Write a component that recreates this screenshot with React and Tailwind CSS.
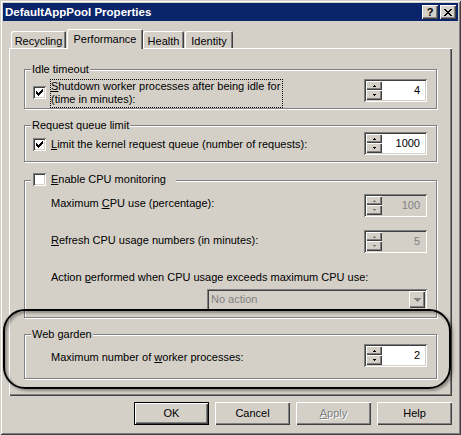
import React from "react";

const RAISED = "shadow-[inset_1px_1px_0_#fff,inset_-1px_-1px_0_#404040,inset_-2px_-2px_0_#808080]";
const SUNKEN = "shadow-[inset_1px_1px_0_#808080,inset_-1px_-1px_0_#fff,inset_2px_2px_0_#404040,inset_-2px_-2px_0_#d4d0c8]";

function Check({ checked, className = "" }) {
  return (
    <span className={`flex w-[13px] h-[13px] shrink-0 items-center justify-center bg-white ${SUNKEN} ${className}`}>
      {checked && (
        <svg width="7" height="7" viewBox="0 0 7 7" shapeRendering="crispEdges">
          <path
            d="M6 0h1v1H6zM5 1h2v1H5zM0 2h1v1H0zM4 2h3v1H4zM0 3h2v1H0zM3 3h3v1H3zM0 4h5v1H0zM1 5h3v1H1zM2 6h1v1H2z"
            fill="#000"
          />
        </svg>
      )}
    </span>
  );
}

function Tri({ dir, color }) {
  return (
    <svg width="3" height="2" viewBox="0 0 3 2" shapeRendering="crispEdges">
      {dir === "up" ? (
        <path d="M1 0h1v1h1v1H0V1h1z" fill={color} />
      ) : (
        <path d="M0 0h3v1H2v1H1V1H0z" fill={color} />
      )}
    </svg>
  );
}

function Spin({ value, disabled, className = "" }) {
  const c = disabled ? "#808080" : "#000";
  return (
    <div className={`flex w-[63px] h-[23px] shrink-0 p-[2px] ${disabled ? "bg-[#d4d0c8]" : "bg-white"} ${SUNKEN} ${className}`}>
      <div className="flex flex-col w-[16px]">
        <div className={`flex h-[9px] items-center justify-center bg-[#d4d0c8] ${RAISED}`}>
          <Tri dir="up" color={c} />
        </div>
        <div className={`flex h-[10px] items-center justify-center bg-[#d4d0c8] ${RAISED}`}>
          <Tri dir="down" color={c} />
        </div>
      </div>
      <div className={`flex flex-1 items-center justify-end pr-[5px] ${disabled ? "text-[#808080]" : "text-black"}`}>
        {value}
      </div>
    </div>
  );
}

function Group({ label, legend, className = "", children }) {
  return (
    <div className={`relative w-[413px] border border-[#808080] shadow-[1px_1px_0_#fff,inset_1px_1px_0_#fff] ${className}`}>
      {legend ? (
        legend
      ) : (
        <span className="absolute -top-[7px] left-[6px] bg-[#d4d0c8] px-[1px] leading-[13px]">{label}</span>
      )}
      {children}
    </div>
  );
}

function Btn({ children, def }) {
  return (
    <div
      className={`flex w-[75px] h-[23px] items-center justify-center bg-[#d4d0c8] ${RAISED} ${def ? "border border-black" : ""}`}
    >
      {children}
    </div>
  );
}

function Tab({ children, selected, className = "" }) {
  return (
    <div
      className={`flex justify-center pt-[4px] rounded-t-[2px] bg-[#d4d0c8] shadow-[inset_1px_1px_0_#fff,inset_-1px_0_0_#404040,inset_-2px_0_0_#808080] ${
        selected ? "relative z-10 h-[20px] -mb-[1px]" : "h-[17px]"
      } ${className}`}
    >
      {children}
    </div>
  );
}

export default function App() {
  return (
    <div className="relative flex flex-col w-[461px] h-[435px] p-[3px] bg-[#d4d0c8] font-['Liberation_Sans',Arial,sans-serif] text-[11px] leading-[13px] text-black shadow-[inset_1px_1px_0_#d4d0c8,inset_-1px_-1px_0_#404040,inset_2px_2px_0_#fff,inset_-2px_-2px_0_#808080]">
      {/* Title bar */}
      <div className="flex h-[18px] shrink-0 items-center justify-between bg-[#0a246a] pl-[2px] pr-[2px]">
        <span className="text-[11.5px] font-bold text-white">DefaultAppPool Properties</span>
        <div className="flex gap-[2px]">
          <div className={`flex w-[16px] h-[14px] items-center justify-center bg-[#d4d0c8] ${RAISED} text-[11px] font-bold leading-[14px]`}>
            ?
          </div>
          <div className={`flex w-[16px] h-[14px] items-center justify-center bg-[#d4d0c8] ${RAISED}`}>
            <svg width="8" height="7" viewBox="0 0 8 7" shapeRendering="crispEdges">
              <path
                d="M0 0h2v1H0zM6 0h2v1H6zM1 1h2v1H1zM5 1h2v1H5zM2 2h4v1H2zM3 3h2v1H3zM2 4h4v1H2zM1 5h2v1H1zM5 5h2v1H5zM0 6h2v1H0zM6 6h2v1H6z"
                fill="#000"
              />
            </svg>
          </div>
        </div>
      </div>

      {/* Tabs */}
      <div className="mx-[6px] mt-[8px] flex h-[19px] shrink-0 items-end pl-[2px]">
        <Tab className="w-[55px]">Recycling</Tab>
        <Tab selected className="ml-[1px] w-[76px]">Performance</Tab>
        <Tab className="w-[41px]">Health</Tab>
        <Tab className="ml-[1px] w-[48px]">Identity</Tab>
      </div>

      {/* Panel */}
      <div className={`mx-[6px] h-[348px] shrink-0 pl-[15px] pt-[21px] shadow-[inset_1px_1px_0_#fff,inset_-1px_-1px_0_#404040,inset_-2px_-2px_0_#808080]`}>
        <Group label="Idle timeout" className="h-[40px]">
          <div className="flex items-start pl-[8px] pr-[9px]">
            <Check checked className="mt-[16px]" />
            <div className="ml-[4px] mt-[9px] h-[29px] w-[233px] border border-dotted border-black">
              <span className="underline underline-offset-[1px]">S</span>hutdown worker processes after being idle for
              <br />
              (time in minutes):
            </div>
            <Spin value="4" className="ml-auto mt-[9px]" />
          </div>
        </Group>

        <Group label="Request queue limit" className="mt-[16px] h-[37px]">
          <div className="flex items-start pl-[8px] pr-[9px]">
            <div className="mt-[12px] flex items-center">
              <Check checked />
              <span className="ml-[5px]">
                <span className="underline underline-offset-[1px]">L</span>imit the kernel request queue (number of requests):
              </span>
            </div>
            <Spin value="1000" className="ml-auto mt-[6px]" />
          </div>
        </Group>

        <Group
          className="mt-[18px] h-[138px]"
          legend={
            <div className="absolute -top-[8px] left-[6px] flex w-[145px] items-center bg-[#d4d0c8] pl-[2px]">
              <Check />
              <span className="ml-[5px]">
                <span className="underline underline-offset-[1px]">E</span>nable CPU monitoring
              </span>
            </div>
          }
        >
          <div className="mt-[13px] flex items-start justify-between pl-[26px] pr-[9px]">
            <span className="mt-[3px]">
              Maximum <span className="underline underline-offset-[1px]">C</span>PU use (percentage):
            </span>
            <Spin value="100" disabled />
          </div>
          <div className="mt-[13px] flex items-start justify-between pl-[26px] pr-[9px]">
            <span className="mt-[4px]">
              <span className="underline underline-offset-[1px]">R</span>efresh CPU usage numbers (in minutes):
            </span>
            <Spin value="5" disabled />
          </div>
          <div className="mt-[18px] pl-[26px]">
            Action <span className="underline underline-offset-[1px]">p</span>erformed when CPU usage exceeds maximum CPU use:
          </div>
          <div className="mt-[5px] flex justify-end pr-[9px]">
            <div className={`flex w-[220px] h-[21px] p-[2px] bg-[#d4d0c8] ${SUNKEN}`}>
              <div className="flex-1 pl-[2px] leading-[17px] text-[#808080]">No action</div>
              <div className={`flex w-[16px] h-[17px] items-center justify-center bg-[#d4d0c8] ${RAISED}`}>
                <svg width="7" height="4" viewBox="0 0 7 4" shapeRendering="crispEdges">
                  <path d="M0 0h7v1H6v1H5v1H4v1H3V3H2V2H1V1H0z" fill="#808080" />
                </svg>
              </div>
            </div>
          </div>
        </Group>

        <Group label="Web garden" className="mt-[16px] h-[45px]">
          <div className="mt-[9px] flex items-start justify-between pl-[26px] pr-[9px]">
            <span className="mt-[7px]">
              Maximum number of <span className="underline underline-offset-[1px]">w</span>orker processes:
            </span>
            <Spin value="2" />
          </div>
        </Group>
      </div>

      {/* Buttons */}
      <div className="mx-[6px] mt-[6px] flex justify-end gap-[6px]">
        <Btn def>OK</Btn>
        <Btn>Cancel</Btn>
        <Btn>
          <span className="text-[#808080] [text-shadow:1px_1px_0_#fff]">
            <span className="underline underline-offset-[1px]">A</span>pply
          </span>
        </Btn>
        <Btn>Help</Btn>
      </div>

      {/* Annotation highlight */}
      <div className="pointer-events-none absolute left-[3px] top-[309px] h-[80px] w-[448px] rounded-[22px] border-2 border-black shadow-[2px_2px_3px_rgba(0,0,0,0.35),inset_2px_2px_3px_rgba(0,0,0,0.35)]" />
    </div>
  );
}
